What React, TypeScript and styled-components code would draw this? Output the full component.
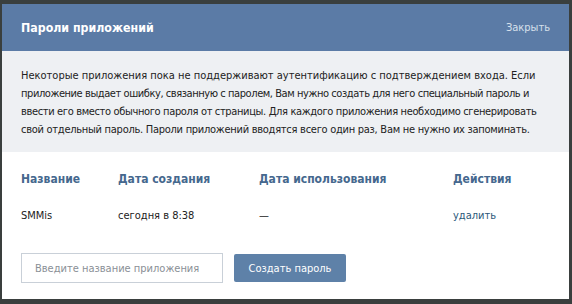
import React from "react";
import styled, { createGlobalStyle } from "styled-components";

const Global = createGlobalStyle`
  html, body { margin: 0; padding: 0; background: #3a3f3e; }
  body { width: 572px; height: 304px; overflow: hidden; }
  * { box-sizing: border-box; }
`;

const Frame = styled.div`
  width: 572px;
  height: 304px;
  padding: 4px 3px 5px 2px;
  background: #3a3f3e;
`;

const Dialog = styled.div`
  height: 100%;
  background: #fff;
  display: flex;
  flex-direction: column;
  font-family: "DejaVu Sans Condensed", "Liberation Sans", sans-serif;
  font-size: 11px;
  color: #222;
`;

const Header = styled.div`
  height: 47px;
  background: #5b7ba6;
  display: flex;
  align-items: center;
  justify-content: space-between;
  padding: 0 19px 0 19px;
`;

const Title = styled.div`
  color: #fff;
  font-weight: bold;
  font-size: 12.3px;
`;

const Close = styled.a`
  color: #d7e0eb;
  font-size: 11px;
  cursor: pointer;
`;

const Info = styled.div`
  background: #eef0f3;
  padding: 16px 19px 11px;
  line-height: 18px;
  color: #222;
  height: 101px;
`;

const Line = styled.span<{ $tight: number }>`
  display: block;
  white-space: nowrap;
  letter-spacing: ${(p) => p.$tight}px;
`;

const Body = styled.div`
  padding: 17px 19px 0;
`;

const Row = styled.div<{ $head?: boolean }>`
  display: grid;
  grid-template-columns: 97px 141px 194px 1fr;
  height: 20px;
  align-items: center;
  margin-bottom: ${(p) => (p.$head ? "16px" : "0")};
  font-weight: ${(p) => (p.$head ? "bold" : "normal")};
  font-size: ${(p) => (p.$head ? "12px" : "11px")};
  color: ${(p) => (p.$head ? "#45688e" : "#222")};
`;

const Link = styled.a`
  color: #2b587a;
  cursor: pointer;
`;

const Form = styled.div`
  display: flex;
  gap: 11px;
  margin-top: 28px;
  align-items: center;
`;

const Input = styled.input`
  width: 202px;
  height: 30px;
  border: 1px solid #c9d0d8;
  padding: 0 13px;
  font-family: inherit;
  font-size: 11px;
  outline: none;
  &::placeholder { color: #8a8f96; }
`;

const Button = styled.button`
  width: 112px;
  height: 28px;
  border: none;
  border-radius: 2px;
  background: #5e81a8;
  color: #fff;
  font-family: inherit;
  font-size: 11px;
  cursor: pointer;
`;

const lines: [string, number][] = [
  ["Некоторые приложения пока не поддерживают аутентификацию с подтверждением входа. Если", 0],
  ["приложение выдает ошибку, связанную с паролем, Вам нужно создать для него специальный пароль и", -0.43],
  ["ввести его вместо обычного пароля от страницы. Для каждого приложения необходимо сгенерировать", -0.35],
  ["свой отдельный пароль. Пароли приложений вводятся всего один раз, Вам не нужно их запоминать.", -0.27],
];

export default function App() {
  return (
    <Frame>
      <Global />
      <Dialog>
        <Header>
          <Title>Пароли приложений</Title>
          <Close>Закрыть</Close>
        </Header>
        <Info>
          {lines.map(([t, s]) => (
            <Line key={t} $tight={s}>
              {t}
            </Line>
          ))}
        </Info>
        <Body>
          <Row $head>
            <div>Название</div>
            <div>Дата создания</div>
            <div>Дата использования</div>
            <div>Действия</div>
          </Row>
          <Row>
            <div>SMMis</div>
            <div>сегодня в 8:38</div>
            <div>—</div>
            <div><Link>удалить</Link></div>
          </Row>
          <Form>
            <Input placeholder="Введите название приложения" />
            <Button>Создать пароль</Button>
          </Form>
        </Body>
      </Dialog>
    </Frame>
  );
}
